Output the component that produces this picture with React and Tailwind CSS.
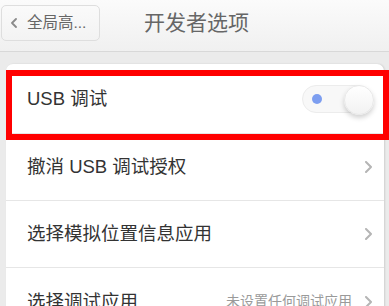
import React from "react";

const font = {
  fontFamily: '"Liberation Sans", "Noto Sans CJK SC", sans-serif',
};

const Chevron = () => (
  <svg width="9" height="12" viewBox="0 0 9 12" className="shrink-0">
    <path d="M2 1 L7 6 L2 11" fill="none" stroke="#b5b5b5" strokeWidth="2" strokeLinecap="round" strokeLinejoin="round" />
  </svg>
);

const Row = ({ label, value, last }) => (
  <div
    className={`h-[67px] flex items-center pl-[21px] pr-[11px] ${
      last ? "" : "border-b border-[#e6e6e6]"
    }`}
  >
    <span className="text-[18.5px] text-[#333]">{label}</span>
    <div className="ml-auto flex items-center gap-[12px]">
      {value && <span className="text-[14px] text-[#9a9a9a]">{value}</span>}
      <Chevron />
    </div>
  </div>
);

export default function App() {
  return (
    <div
      className="w-[389px] h-[306px] overflow-hidden relative bg-[#ebebeb]"
      style={font}
    >
      {/* header */}
      <div className="h-[52px] flex items-center border-b border-[#d8d8d8] bg-gradient-to-b from-[#fbfbfb] to-[#f0f0f0]">
        <button className="ml-[1px] mt-[-6px] w-[99px] h-[36px] rounded-[5px] border border-[#dedede] bg-gradient-to-b from-[#fafafa] to-[#f3f3f3] flex items-center pl-[8px] gap-[9px]">
          <svg width="8" height="10" viewBox="0 0 8 10">
            <path d="M6 1 L2 5 L6 9" fill="none" stroke="#8a8a8a" strokeWidth="1.8" strokeLinecap="round" strokeLinejoin="round" />
          </svg>
          <span className="text-[15.5px] text-[#666]">全局高...</span>
        </button>
        <span className="ml-[44px] mt-[-6px] text-[21px] text-[#666]">开发者选项</span>
      </div>

      {/* list */}
      <div className="pt-[12px] pl-[6px] pr-[5px]">
        <div className="bg-white rounded-t-[7px] shadow-[1px_0_2px_rgba(0,0,0,0.12)]">
          <div className="h-[70px] flex items-center pl-[21px] pr-[12px] border-b border-[#e6e6e6]">
            <span className="text-[18.5px] text-[#333]">USB 调试</span>
            <div className="ml-auto w-[70px] h-[28px] rounded-full bg-[#f8f8f8] border border-[#ececec] flex items-center">
              <span className="ml-[9px] w-[10px] h-[10px] rounded-full bg-[#7d9ef0]" />
              <span className="ml-auto mr-[-3px] mt-[3px] w-[30px] h-[30px] rounded-full bg-gradient-to-b from-white to-[#f2f2f2] border border-[#e8e8e8] shadow-[0_3px_5px_rgba(0,0,0,0.18)]" />
            </div>
          </div>
          <Row label="撤消 USB 调试授权" />
          <Row label="选择模拟位置信息应用" />
          <Row label="选择调试应用" value="未设置任何调试应用" last />
        </div>
      </div>

      {/* red highlight annotation */}
      <div className="absolute left-[6px] top-[70px] w-[383px] h-[70px] border-[6px] border-[#ff0000] pointer-events-none" />
    </div>
  );
}
